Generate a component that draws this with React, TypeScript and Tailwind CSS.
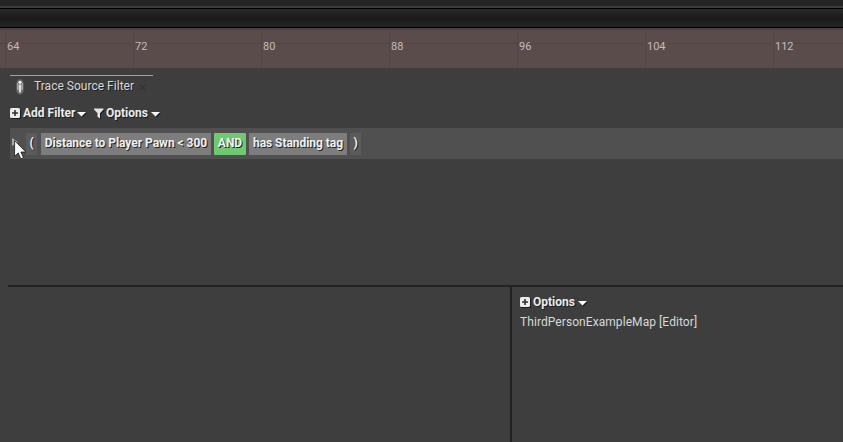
import type { ReactNode } from "react";

const ticks = [64, 72, 80, 88, 96, 104, 112];

function PlusIcon() {
  return (
    <svg width="10" height="10" viewBox="0 0 10 10" className="drop-shadow-[1px_1px_0_#1c1c1c]">
      <rect width="10" height="10" rx="1.5" fill="#ececec" />
      <path d="M5 2v6M2 5h6" stroke="#303030" strokeWidth="1.6" />
    </svg>
  );
}

function FunnelIcon() {
  return (
    <svg width="10" height="11" viewBox="0 0 10 11" className="drop-shadow-[1px_1px_0_#1c1c1c]">
      <path d="M0 .5h9.5v1L6 5.2v5.3L3.5 8.7V5.2L0 1.5z" fill="#e4e4e4" />
    </svg>
  );
}

function Caret() {
  return (
    <svg width="9" height="5" viewBox="0 0 9 5" className="mt-[2px] drop-shadow-[1px_1px_0_#1c1c1c]">
      <path d="M0 0h9L4.500 4.500z" fill="#fff" />
    </svg>
  );
}

function PawnIcon() {
  return (
    <svg width="10" height="16" viewBox="0 0 10 16">
      <path d="M5 .5C2.2 .5 1.500 3 1.500 8s.7 7.200 3.500 7.200S8.500 13 8.500 8 7.800 .5 5 .5z" fill="#707070" stroke="#5c5c5c" />
      <path d="M2.500 4v7M7.500 4v7" stroke="#a3a3a3" />
      <circle cx="5" cy="3.300" r="1.600" fill="#f0f0f0" />
      <path d="M3.600 5.400h2.800v4L5.800 13.500H4.200L3.600 9.400z" fill="#dedede" />
    </svg>
  );
}

function Chip({ className, children }: { className: string; children: ReactNode }) {
  return (
    <span className={`flex h-[22px] shrink-0 items-center justify-center whitespace-pre pb-[2px] font-bold text-[#f0f0f0] [text-shadow:1px_1px_0_#222] ${className}`}>
      {children}
    </span>
  );
}

export default function App() {
  return (
    <div className="flex h-[442px] w-[843px] flex-col overflow-hidden bg-[#3e3e3e] font-[Roboto,sans-serif] text-[12px] leading-[14px] text-[#d8d8d8]">
      <div className="h-2 shrink-0 border-b-2 border-[#3c3c3c] bg-[#242424]" />
      <div className="h-5 shrink-0 border-y border-black bg-linear-to-b from-[#292929] via-[#1b1a1a] to-[#242424]" />
      <div className="h-0.5 shrink-0 bg-[#464545]" />
      <div className="flex h-[38px] shrink-0 bg-[linear-gradient(#524645,#524645)] bg-[length:100%_1px] bg-[position:0_13px] bg-no-repeat bg-[#5a4c4b] pl-[5px] text-[11px] text-[#c2bdbc]">
        {ticks.map((tick) => (
          <div key={tick} className="w-32 shrink-0 border-l border-[#524645] pt-[10px] pl-px">
            {tick}
          </div>
        ))}
      </div>

      <div className="flex h-[217px] shrink-0 flex-col pt-[7px]">
        <div className="ml-[10px] h-px w-[143px] shrink-0 bg-[#c8a81c]" />
        <div className="ml-[10px] flex h-[22px] w-[143px] shrink-0 items-center pl-[5px] [text-shadow:1px_1px_0_#222]">
          <PawnIcon />
          <span className="ml-[9px] w-[102px] whitespace-nowrap pb-[2px] tracking-[0.02px]">Trace Source Filter</span>
          <svg width="7" height="7" viewBox="0 0 7 7" className="ml-[3px]">
            <path d="M1 1l5 5M6 1L1 6" stroke="#292929" />
          </svg>
        </div>
        <div className="flex h-[30px] shrink-0 items-center pl-[10px] font-bold text-[#ebebeb] [text-shadow:1px_1px_0_#1c1c1c]">
          <PlusIcon />
          <span className="ml-[3px] w-[54px] whitespace-nowrap">Add Filter</span>
          <Caret />
          <span className="ml-2"><FunnelIcon /></span>
          <span className="ml-[2px] w-[45px] whitespace-nowrap">Options</span>
          <Caret />
        </div>
        <div className="relative ml-[10px] flex h-[31px] shrink-0 items-center bg-[#505050] pl-[2px]">
          <svg width="6" height="8" viewBox="0 0 6 8" className="mb-1">
            <path d="M0 0l6 4-6 4z" fill="#aaa" />
          </svg>
          <Chip className="ml-[8px] w-[11px] bg-[#5b5b5b]">(</Chip>
          <Chip className="ml-[4px] w-[170px] bg-[#7d7d7d] tracking-[-0.03px]">{"Distance to Player Pawn < 300"}</Chip>
          <Chip className="ml-[3px] w-[32px] rounded-[1px] bg-[#70c970]">AND</Chip>
          <Chip className="ml-[3px] w-[98px] bg-[#7d7d7d] tracking-[-0.05px]">has Standing tag</Chip>
          <Chip className="ml-[3px] w-[11px] bg-[#5b5b5b]">)</Chip>
          <svg width="14" height="20" viewBox="0 0 14 20" className="absolute top-[12px] left-[4px]">
            <path d="M.6 .7v15.600l3.600-3.400 2.600 6 2.700-1.200-2.600-5.700h5z" fill="#fff" stroke="#171717" strokeWidth=".8" />
          </svg>
        </div>
      </div>

      <div className="ml-2 flex grow border-t-2 border-[#222]">
        <div className="w-[504px] shrink-0 border-r-2 border-[#222]" />
        <div className="flex flex-col pt-[7px] pl-2">
          <div className="flex h-4 items-center font-bold text-[#ebebeb] [text-shadow:1px_1px_0_#1c1c1c]">
            <PlusIcon />
            <span className="ml-[3px] w-[45px] whitespace-nowrap">Options</span>
            <Caret />
          </div>
          <div className="mt-[5px] whitespace-nowrap tracking-[0.07px]">ThirdPersonExampleMap [Editor]</div>
        </div>
      </div>
    </div>
  );
}
